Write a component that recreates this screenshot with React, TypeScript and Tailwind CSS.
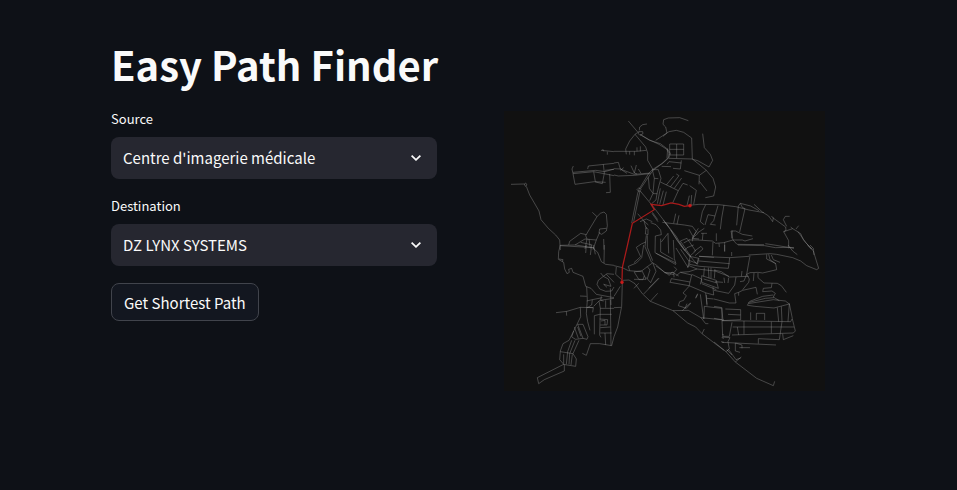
import { useId } from 'react';

const sans = "font-['Noto_Sans_CJK_SC','Open_Sans',sans-serif]";

type Tile = { x: number; y: number; roads: string[] };

// Street network, split into districts. Each district is drawn at three units per pixel.
const districts: Tile[] = [
  {
    x: 500, y: 105,
    roads: [
      'M36 238L76 237L80 234L84 240L79 244L76 237',
      'M82 244L92 270L106 294L120 318L126 344L148 370L170 390L182 405L184 435',
      'M223 183L219 192L222 206L228 238L286 230L310 236L316 204L313 178',
      'M222 206L284 200L345 212M222 202L290 196L318 200L345 192M266 192L268 183L345 175M318 196L345 193',
      'M284 200L289 230L320 232M332 207L334 262L321 263M306 136L345 140M325 140L325 149M311 132L314 139',
      'M280 322L294 335M294 335L304 325L315 321L322 328L325 362L322 378L308 388L300 384L302 372L322 370M294 335L270 375L260 392L264 402L258 432M302 382L292 405L282 434',
      'M209 420L212 409L245 385L262 389M184 421L230 420L285 429M228 420L258 402L292 405M270 402L274 430M245 412L280 420M314 402L315 434',
    ],
  },
  {
    x: 610, y: 105,
    roads: [
      'M58 48L86 81M91 76L92 66L101 59L114 57M90 80L101 80L102 86L93 91L88 86L90 80L78 88L62 108L50 132L52 148M78 88L110 126L116 144L116 166L132 194',
      'M15 139L82 139L112 136M62 139L62 149M76 139L76 151M84 139L84 127M94 139L94 124',
      'M93 88L120 104L150 118L172 132L180 144L178 158L158 176L130 194L120 204L90 253',
      'M97 91L122 106L154 116L175 132L184 145L180 158L162 174L132 196L94 252',
      'M162 94L174 84L170 66L162 58L164 44L178 39L212 38L238 47M140 106L180 80L202 76L224 82L248 99L250 162M180 160L248 162L266 167L300 186L311 166L304 148L286 128L281 86',
      'M182 117L224 117L224 150L182 150ZM203 117L203 160M182 133L224 133M176 130L174 160',
      'M15 174L28 172L34 192M15 191L34 192L44 196L76 208L126 204M34 192L54 205M66 182L76 204L84 207M76 204L82 180M44 188L34 196M88 192L96 205M15 210L28 213L76 211L122 206',
      'M217 166L214 192L192 190M217 174L180 170L174 178M158 184L186 185M250 162L274 181L292 196L312 220L320 246L314 273L289 278M292 196L271 211L226 197M271 211L270 238M271 229L294 258M242 242L262 256L254 298',
      'M130 194L148 194L156 220L150 241L144 266L141 285L128 296M130 194L136 220L132 265L122 287M136 220L148 221M118 217L121 250L132 265M132 266L145 266',
      'M154 231L208 257L222 235L236 240M172 240L194 213M184 246L210 212L202 207M196 250L218 219M208 257L191 294M163 257L152 298M172 260L162 300M154 250L145 296M241 272L234 302M248 270L246 302',
      'M90 253L86 265L68 354M93 258L74 350M84 254L90 248L96 254L90 260ZM92 256L132 304L178 364',
      'M86 326L105 348L118 360M93 350L112 342L130 350M105 348L112 372M130 322L146 344M129 325L147 350',
      'M160 352L226 360L250 364L262 380L250 400M200 326L194 355M210 331L204 358M265 384L286 370M268 384L250 400L270 402',
    ],
  },
  {
    x: 690, y: 190,
    roads: [
      'M0 46L30 43L90 44L140 50L180 60L225 68M50 44L40 65L34 95L45 104M57 74L48 105M57 74L78 78L74 92L64 103L80 105M78 78L87 47M105 45L98 84L94 118M148 48L143 106M148 48L154 40L185 48L210 62M154 40L160 52L168 56L152 126',
      'M0 150L26 150L70 153L80 160L104 158L132 150L160 150L168 153L192 146M126 123L132 150L144 163L225 164M126 123L140 123L160 133L190 138M130 122L128 145M82 130L82 153M36 130L54 130M42 130L40 150M90 160L91 171M107 157L107 184M72 156L70 196',
      'M0 118L12 140L28 115M12 140L10 154M128 186L128 198',
    ],
  },
  {
    x: 715, y: 105,
    roads: [
      'M120 298L145 321L164 333L176 350L178 338L172 334M176 338L215 366L216 376L209 380L224 407L224 430M227 334L214 334L208 344L218 364M209 380L236 371L246 377L260 386L268 404L292 432M236 371L230 366M246 372L254 362M252 380L276 414L296 434M154 416L180 420L240 430',
    ],
  },
  {
    x: 635, y: 220,
    roads: [
      'M35 20L42 28L42 44L34 42L36 24M37 46L33 80L52 126M40 46L40 82L56 122M35 66L22 72L7 82L20 110L0 128',
      'M50 8L66 14L80 30L82 44L64 48L63 98L126 134M66 100L124 128M80 56L80 96L118 118M82 66L102 40L104 100M118 60L121 116L126 132',
      'M88 0L110 30L140 75L190 134M94 8L126 48L150 88L168 110M110 30L130 62L152 92M126 84L162 142L168 128L140 88',
      'M52 126L68 136L92 158L120 158L128 148L120 140M54 130L40 140L24 152L0 156M24 152L36 178L0 178M40 140L48 150L40 176M56 128L66 154L50 188L36 172M66 138L106 166L114 156L134 168M92 158L120 164M112 176L168 186M108 188L112 176M120 158L120 172M0 205L14 190M44 205L74 174',
    ],
  },
  {
    x: 670, y: 235,
    roads: [
      'M34 18L54 10L80 48L64 62L34 18M44 24L62 14M54 38L74 30M54 38L48 46M74 50L96 34L102 42L78 62M62 64L90 70L86 86L60 76M64 62L56 98M90 64L182 68L240 64M90 78L182 86M182 68L180 86L178 100L92 94L62 88M88 70L84 86',
      'M60 92L84 102L138 108L180 124M84 102L60 110L34 112L22 122M34 112L68 120L60 154M4 142L60 152L112 174L134 180M68 118L98 132L94 148M98 122L142 136L148 160L98 142L98 122M104 132L144 144M98 146L142 164M106 98L104 124M118 98L120 130M126 98L126 130M138 104L136 130',
      'M60 154L42 174L52 182L44 196L32 200L28 212L52 220L66 204M86 178L80 190M110 174L114 208M114 190L134 192M134 180L132 156M138 140L162 142',
    ],
  },
  {
    x: 500, y: 245,
    roads: [
      'M184 0L179 20L178 43L194 52L197 72L204 86L211 82L209 73L218 70L222 82L252 94L260 124L276 130L292 148L345 158M180 42L192 44L190 50',
      'M284 0L285 12L296 22L307 50L320 58L345 61M262 0L260 24M278 0L274 30M285 8L289 28M316 0L315 54M184 2L285 8',
      'M263 125L265 165L262 205L266 230L273 256M243 153L263 154M263 168L280 164L310 158M280 164L278 180L265 188M284 184L302 166L345 160M263 187L283 188L281 202M307 154L305 166L314 168M334 130L336 180',
      'M305 84L313 94L324 86L345 88M313 94L298 106L294 118L302 132L320 139L338 138L345 126M313 94L328 102L336 124L314 118M322 88L345 112M314 118L324 127',
      'M171 203L204 199L244 187L283 188M202 199L203 212M244 187L245 215L236 234L224 258L210 286L192 296L184 318L182 344L196 360L196 378L136 404L119 416L115 398L192 359',
      'M224 258L218 276L230 283L252 280L236 238L252 238L267 275L264 283L252 280M236 246L246 274M226 246L238 280M240 286L222 326L232 342L230 364L192 358M184 320L222 326M218 286L206 320L202 358M228 286L212 326L210 358M220 328L216 360M194 328L194 356',
      'M300 168L304 190L302 270L306 277M304 190L345 190M302 208L338 208M302 222L326 224L324 240L304 240M306 228L318 226L318 240M304 264L338 264M318 264L320 300M334 165L336 302M286 268L286 212L302 208M250 325L262 331L274 296L302 296L338 302L345 275M320 166L320 188M304 248L334 246',
    ],
  },
  {
    x: 610, y: 245,
    roads: [
      'M15 62L40 68L58 77L98 80M22 66L20 88L38 104M42 106L60 105L78 116L100 146L124 169L192 197L236 234L260 246L279 266L345 316M104 147L150 100M124 169L146 145',
      'M40 110L38 184L26 246L15 275M15 188L36 187M15 154L34 124',
      'M58 64L82 54L98 38L104 0M58 64L62 77M76 82L90 104L102 104L106 92',
      'M192 197L238 196L276 218L345 225M220 197L244 174M228 190L234 176M276 218L290 236L298 236M285 222L286 184L338 190L342 226M274 148L284 222M292 150L294 182M279 266L286 252M266 146L260 158',
      'M345 270L340 268M345 280L338 278M345 292L336 290M270 34L315 37',
    ],
  },
  {
    x: 715, y: 245,
    roads: [
      'M104 30L168 26L188 28L236 38L260 48L278 62L308 74L314 70L298 18L280 0M108 32L98 88L108 83L132 82L146 84L188 74L185 56L168 44L164 28M172 30L178 44L198 52M158 28L158 42L186 56M222 0L236 18L250 29M224 7L240 8M288 0L298 10L300 30M32 0L32 20M72 0L152 2L184 8L222 7',
      'M0 75L22 80L46 96L104 94M84 78L82 94M66 96L62 120L44 145L0 136M44 98L42 114M30 98L32 114M98 88L106 102L104 112L86 134M98 88L90 108L78 110M120 84L118 108M132 84L132 98L150 114L190 115L202 122L217 142M174 115L172 128L148 130L146 140L174 138L184 145L178 156L184 160L196 167',
      'M130 148L126 127L86 136L74 142L62 146L66 174L46 174L0 162M74 142L74 152M0 184L24 188L24 224L0 220',
      'M102 181L122 184L180 189L226 177L214 168L178 164L102 176L100 182M102 174L110 168L146 154L178 150M106 172L154 160L180 158',
      'M34 192L80 194L80 212M42 208L80 210M80 212L80 224L24 227M24 225L26 274L46 274L54 232M24 227L230 230L235 220L226 176L222 230M190 188L194 230M202 184L204 230L196 284M172 230L172 265M110 202L110 225M127 225L127 205L152 205L152 225',
      'M235 222L244 258L238 264L54 270M56 246L240 246M90 228L90 268M70 246L74 270M133 296L133 281L196 284M206 266L208 284L238 272M24 276L48 278L42 290L46 312L40 316M24 292L64 294L186 300M64 294L84 300L84 310M64 294L64 318L78 322M76 308L108 308',
      'M0 291L36 320L64 351L128 400L178 422L182 409M36 320L44 314L66 344L80 339M64 351L82 336M38 314L54 330',
    ],
  },
];

function StreetMap() {
  return (
    <svg viewBox="505 111 321 280" className="w-full" role="img" aria-label="Shortest path on the street map">
      <rect x="505" y="111" width="321" height="280" fill="#111111" />
      {districts.map((d, i) => (
        <g key={i} transform={`translate(${d.x} ${d.y}) scale(0.33333)`}>
          <path d={d.roads.join('')} fill="none" stroke="#999999" strokeOpacity="0.55" strokeWidth="2.2" strokeLinejoin="round" />
        </g>
      ))}
      <g transform="translate(610 105) scale(0.33333)" fill="none" stroke="#c41c1c" strokeWidth="3.8" strokeOpacity="0.85">
        <path d="M243 302L226 304L210 298L186 294L158 302L126 298L136 314L70 355L56 418L40 488L39 532" />
        <circle cx="243" cy="302" r="3.5" fill="#d81818" />
        <circle cx="39" cy="532" r="3.5" fill="#d81818" />
      </g>
    </svg>
  );
}

function SelectField({ label, options }: { label: string; options: string[] }) {
  const id = useId();
  return (
    <div className="flex flex-col gap-2">
      <label htmlFor={id} className="text-[13px] leading-5">{label}</label>
      <div className="relative">
        <select
          id={id}
          className="block h-[42px] w-full appearance-none rounded-lg bg-[#262730] pr-10 pl-3 text-[15px] text-[#fafafa] outline-none"
        >
          {options.map((o) => <option key={o}>{o}</option>)}
        </select>
        <svg viewBox="0 0 10 6" className="pointer-events-none absolute top-[18px] right-4 h-1.5 w-2.5" fill="none" stroke="#fafafa" strokeWidth="1.8">
          <path d="M0.6 0.7L5 4.8L9.4 0.7" />
        </svg>
      </div>
    </div>
  );
}

export default function App() {
  return (
    <main className={`min-h-screen bg-[#0e1117] pt-[34px] pr-[127px] pl-[111px] text-[#fafafa] ${sans}`}>
      <h1 className="text-[40px] leading-[60px] font-bold">Easy Path Finder</h1>
      <div className="mt-[15px] grid grid-cols-2 gap-[67px]">
        <form className="flex flex-col items-stretch gap-[17px]" onSubmit={(e) => e.preventDefault()}>
          <SelectField label="Source" options={["Centre d'imagerie médicale", 'DZ LYNX SYSTEMS']} />
          <SelectField label="Destination" options={['DZ LYNX SYSTEMS', "Centre d'imagerie médicale"]} />
          <button type="submit" className="h-[38px] self-start rounded-lg border border-[#41444c] bg-[#131720] px-3 pt-0.5 text-[15px]">
            Get Shortest Path
          </button>
        </form>
        <div className="mt-0.5 max-w-[321px]">
          <StreetMap />
        </div>
      </div>
    </main>
  );
}
